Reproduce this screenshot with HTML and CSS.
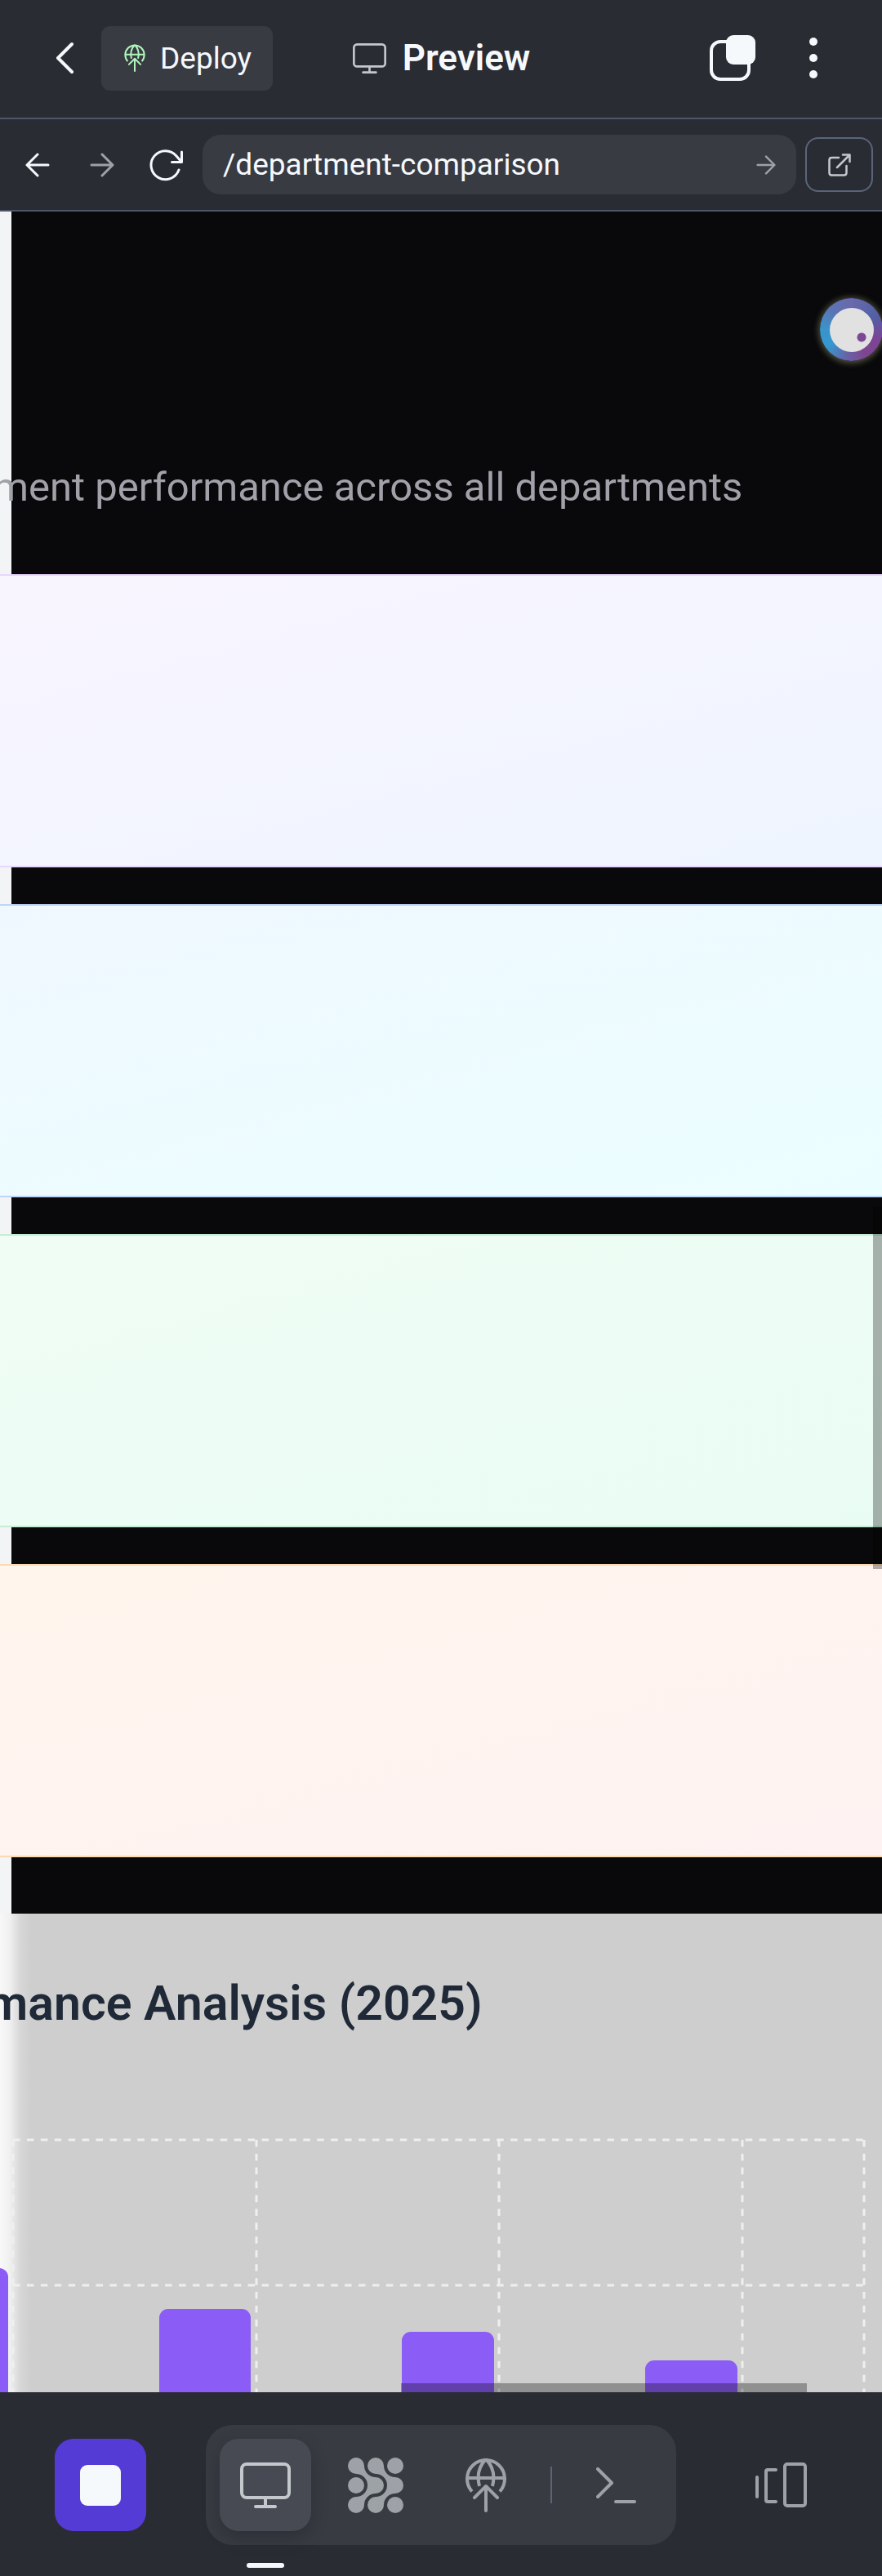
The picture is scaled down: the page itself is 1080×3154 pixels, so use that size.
FILE: index.html
```html
<!DOCTYPE html>
<html lang="en">
<head>
<meta charset="utf-8">
<meta name="viewport" content="width=device-width, initial-scale=1">
<title>Preview</title>
<link rel="stylesheet" href="styles.css">
</head>
<body>
<svg class="defs" aria-hidden="true">
  <symbol id="deploy" viewBox="0 0 50 67">
    <g fill="none" stroke="currentColor" stroke-width="4">
      <path d="M8 41.500A23 23 0 1 1 42 41.500M2 25H48M25 2Q12 15 17 35M25 2Q38 15 33 35"/>
      <path d="M25 65V36M11 49L25 35L39 49" stroke-linecap="round" stroke-linejoin="round"/>
    </g>
  </symbol>
  <symbol id="monitor" viewBox="0 0 62 56">
    <g fill="none" stroke="currentColor" stroke-width="4" stroke-linecap="round">
      <rect x="2" y="2" width="58" height="41" rx="6"/>
      <path d="M31 43V54M19 54H43"/>
    </g>
  </symbol>
  <symbol id="arrow" viewBox="0 0 30 30">
    <path d="M2 15H28M15 2L28 15L15 28" fill="none" stroke="currentColor" stroke-width="3" stroke-linecap="round" stroke-linejoin="round"/>
  </symbol>
</svg>

<div class="app">
  <header class="topbar">
    <div class="topbar-left">
      <button class="icon-btn back" aria-label="Back">
        <svg width="22" height="40" viewBox="0 0 22 40"><path d="M20 3L3 20L20 37" fill="none" stroke="currentColor" stroke-width="4" stroke-linecap="round" stroke-linejoin="round"/></svg>
      </button>
      <button class="deploy"><svg class="deploy-icon" width="26" height="34"><use href="#deploy"/></svg>Deploy</button>
    </div>
    <h1 class="topbar-title"><svg class="title-icon" width="41" height="37"><use href="#monitor"/></svg>Preview</h1>
    <div class="topbar-right">
      <button class="icon-btn" aria-label="Tabs">
        <svg width="56" height="56" viewBox="0 0 56 56"><rect x="2" y="8" width="46" height="46" rx="11" fill="none" stroke="currentColor" stroke-width="4"/><rect x="20" width="36" height="36" rx="9" fill="currentColor"/></svg>
      </button>
      <button class="icon-btn" aria-label="More">
        <svg width="10" height="50" viewBox="0 0 10 50"><g fill="currentColor"><circle cx="5" cy="5" r="5"/><circle cx="5" cy="25" r="5"/><circle cx="5" cy="45" r="5"/></g></svg>
      </button>
    </div>
  </header>

  <form class="navbar">
    <div class="nav-buttons">
      <button type="button" class="icon-btn" aria-label="Previous page"><svg class="flip" width="30" height="30"><use href="#arrow"/></svg></button>
      <button type="button" class="icon-btn dim" aria-label="Next page"><svg width="30" height="30"><use href="#arrow"/></svg></button>
      <button type="button" class="icon-btn" aria-label="Reload">
        <svg width="42" height="40" viewBox="0 0 42 40"><path d="M36 26A17.500 17.500 0 1 1 33 9L39 16M39.500 4V16.500H27.500" fill="none" stroke="currentColor" stroke-width="3" stroke-linecap="round" stroke-linejoin="round"/></svg>
      </button>
    </div>
    <div class="address">
      <input class="address-input" type="text" aria-label="Path" value="/department-comparison">
      <button class="icon-btn dim" aria-label="Go"><svg width="24" height="24"><use href="#arrow"/></svg></button>
    </div>
    <button type="button" class="open-btn" aria-label="Open in new tab">
      <svg width="28" height="28" viewBox="0 0 28 28"><path d="M13 5H4.500Q1.500 5 1.500 8V23.500Q1.500 26.500 4.500 26.500H19.500Q22.500 26.500 22.500 23.500V15M11 17L26.500 1.500M18 1.500H26.500V10" fill="none" stroke="currentColor" stroke-width="2.500" stroke-linecap="round" stroke-linejoin="round"/></svg>
    </button>
  </form>

  <main class="preview">
    <div class="intro"><p class="subtitle">ment performance across all departments</p></div>
    <div class="cards">
      <section class="card purple"></section>
      <section class="card blue"></section>
      <section class="card green"></section>
      <section class="card orange"></section>
    </div>
    <section class="chart">
      <h2 class="chart-title">mance Analysis (2025)</h2>
      <svg class="plot" viewBox="0 0 1080 311">
        <g stroke="#efefef" stroke-width="3" stroke-dasharray="8.500 8.420" fill="none">
          <path d="M16 2H1058M16 180H1058M16 2V311M314 2V311M611 2V311M909 2V311M1058 2V311"/>
        </g>
        <g fill="#8b5cf6">
          <rect x="-102" y="159" width="112" height="170" rx="11"/>
          <rect x="195" y="209" width="112" height="120" rx="11"/>
          <rect x="492" y="237" width="113" height="120" rx="11"/>
          <rect x="790" y="272" width="113" height="120" rx="11"/>
        </g>
      </svg>
    </section>
    <div class="scroll-y"></div>
    <div class="scroll-x"></div>
    <button class="assistant" aria-label="Assistant"><span class="assistant-face"></span></button>
  </main>

  <nav class="dock" aria-label="Tools">
    <button class="tile stop" aria-label="Stop"><span class="stop-square"></span></button>
    <div class="dock-group">
      <button class="tile active" aria-label="Preview"><svg width="62" height="56"><use href="#monitor"/></svg></button>
      <button class="tile" aria-label="Agent">
        <svg width="68" height="68" viewBox="0 0 68 68"><g fill="currentColor">
          <circle cx="10" cy="10" r="10"/><circle cx="34" cy="10" r="10"/><circle cx="58" cy="10" r="10"/>
          <circle cx="10" cy="34" r="10"/><circle cx="34" cy="34" r="10"/><circle cx="58" cy="34" r="10"/>
          <circle cx="10" cy="58" r="10"/><circle cx="34" cy="58" r="10"/><circle cx="58" cy="58" r="10"/>
          <path d="M20 10A14 14 0 0 0 34 24L24 34A14 14 0 0 0 10 20Z"/>
          <path d="M44 10A14 14 0 0 0 58 24L48 34A14 14 0 0 0 34 20Z"/>
          <path d="M10 48A14 14 0 0 0 24 34L34 44A14 14 0 0 0 20 58Z"/>
          <path d="M34 48A14 14 0 0 0 48 34L58 44A14 14 0 0 0 44 58Z"/>
        </g></svg>
      </button>
      <button class="tile" aria-label="Deployments"><svg width="50" height="67"><use href="#deploy"/></svg></button>
      <span class="divider"></span>
      <button class="tile" aria-label="Shell">
        <svg width="50" height="44" viewBox="0 0 50 44"><path d="M2 2L19 19L2 36M24 42H47" fill="none" stroke="currentColor" stroke-width="4" stroke-linecap="round" stroke-linejoin="round"/></svg>
      </button>
    </div>
    <button class="tile" aria-label="Switch panes">
      <svg width="64" height="56" viewBox="0 0 64 56"><g fill="none" stroke="currentColor" stroke-width="4" stroke-linecap="round" stroke-linejoin="round"><path d="M2 18V42M25 9H15Q13 9 13 11V46Q13 48 15 48H25"/><rect x="36" y="2" width="25" height="51" rx="3"/></g></svg>
    </button>
  </nav>
</div>
</body>
</html>
```

FILE: styles.css
```css
* { box-sizing: border-box; }

body {
  margin: 0;
  background: #2a2c34;
  color: #f5f9fc;
  font-family: Roboto, "Noto Sans", sans-serif;
}

button, input {
  border: 0;
  margin: 0;
  padding: 0;
  background: none;
  color: inherit;
  font: inherit;
}

svg { display: block; flex: none; }
.defs { position: absolute; width: 0; height: 0; }

.app {
  display: flex;
  flex-direction: column;
  min-height: 100vh;
  overflow: hidden;
}

/* Top bar */
.topbar {
  display: grid;
  grid-template-columns: 1fr auto 1fr;
  align-items: center;
  height: 146px;
  padding: 0 79px 2px 34px;
  border-bottom: 2px solid #4e5569;
}
.topbar-left { display: flex; align-items: center; }
.topbar-right { display: flex; align-items: center; justify-content: flex-end; gap: 66px; }
.icon-btn { display: flex; align-items: center; justify-content: center; }
.back { width: 90px; height: 80px; }
.deploy {
  display: flex;
  align-items: center;
  gap: 18px;
  height: 79px;
  padding: 0 26px 0 28px;
  border-radius: 11px;
  background: #393b43;
  font-size: 37px;
}
.deploy-icon { color: #b0f5bc; }
.topbar-title {
  display: flex;
  align-items: center;
  gap: 20px;
  margin: 0 0 0 46px;
  font-size: 44px;
  font-weight: 600;
}
.title-icon { color: #c2c8cc; }

/* Address bar */
.navbar {
  display: flex;
  align-items: center;
  height: 113px;
  padding: 0 11px 0 6px;
  border-bottom: 2px solid #4e5569;
}
.nav-buttons { display: flex; width: 242px; padding-right: 5px; }
.nav-buttons .icon-btn { flex: 1; height: 72px; }
.dim { color: #9da2a6; }
.flip { transform: scaleX(-1); }
.address {
  display: flex;
  align-items: center;
  flex: 1;
  height: 73px;
  margin-right: 11px;
  padding: 0 25px;
  border-radius: 22px;
  background: #393b43;
}
.address-input { flex: 1; min-width: 0; font-size: 37px; outline: 0; }
.open-btn {
  display: flex;
  align-items: center;
  justify-content: center;
  width: 83px;
  height: 67px;
  border: 2px solid #5b6579;
  border-radius: 16px;
  color: #c2c8cc;
}

/* Previewed page */
.preview {
  position: relative;
  flex: 1;
  display: flex;
  flex-direction: column;
  background: linear-gradient(to right, #f3f4f6 14px, #09090b 14px);
  font-family: Roboto, sans-serif;
}
.intro {
  display: flex;
  align-items: flex-end;
  height: 444px;
  padding-bottom: 68px;
}
.subtitle {
  margin: 0 0 0 -8px;
  color: #a1a1aa;
  font-size: 49px;
  line-height: 76px;
  white-space: nowrap;
}
.cards { display: grid; gap: 45px; }
.card { height: 359px; border: solid; border-width: 2px 0; }
.purple { background: linear-gradient(165deg, #f9f5ff, #eef5ff); border-color: #e9d5ff; }
.blue { background: linear-gradient(165deg, #eff8ff, #ebfeff); border-color: #bdd6f5; }
.green { background: linear-gradient(165deg, #f0fdf4, #e9fcf4); border-color: #c6ecd6; }
.orange { background: linear-gradient(165deg, #fff5ec, #fef2f2); border-color: #fbd9b2; }

.chart {
  flex: 1;
  display: flex;
  flex-direction: column;
  justify-content: space-between;
  margin-top: 69px;
  padding-top: 74px;
  background: linear-gradient(to right, #f8f8f8, #f0f0f0 12px, #d8d8d8 24px, #cecece 38px);
}
.chart-title {
  margin: 0 0 0 -17px;
  color: #1f2937;
  font-size: 59px;
  font-weight: 600;
  line-height: 72px;
  white-space: nowrap;
}
.plot { width: 100%; }

.scroll-y {
  position: absolute;
  top: 1218px;
  right: 0;
  width: 11px;
  height: 444px;
  background: rgba(0, 0, 0, 0.3);
}
.scroll-x {
  position: absolute;
  bottom: 0;
  left: 491px;
  right: 92px;
  height: 11px;
  background: rgba(0, 0, 0, 0.3);
}
.assistant {
  position: absolute;
  top: 106px;
  right: -1px;
  display: grid;
  place-items: center;
  width: 77px;
  height: 77px;
  border-radius: 50%;
  background: conic-gradient(#6a69ad, #5260a5 60deg, #7b4595 110deg, #7e4590 150deg, #6763a8 190deg, #3498cf 235deg, #3a94cb 270deg, #5b74b3 315deg, #6a69ad);
  box-shadow: 0 1px 7px 2px rgba(150, 150, 110, 0.5);
}
.assistant-face {
  width: 54px;
  height: 54px;
  border-radius: 50%;
  background: radial-gradient(circle at 39px 36px, #7b4896 5px, #e1e1e1 6px);
}

/* Dock */
.dock {
  display: flex;
  align-items: center;
  justify-content: space-between;
  height: 225px;
  padding: 2px 67px 0;
  background: #2a2c34;
}
.dock-group {
  display: flex;
  align-items: center;
  gap: 23px;
  padding: 17px;
  border-radius: 33px;
  background: #393b43;
}
.tile {
  display: grid;
  place-items: center;
  width: 112px;
  height: 113px;
  border-radius: 23px;
  color: #9da2a6;
}
.stop { background: #553bd5; }
.stop-square { width: 50px; height: 50px; border-radius: 9px; background: #f5f9fc; }
.active {
  position: relative;
  background: #474a53;
  color: #c2c8cc;
  box-shadow: 0 8px 22px rgba(0, 0, 0, 0.2);
}
.active::after {
  content: "";
  position: absolute;
  top: 152px;
  left: 33px;
  width: 46px;
  height: 6px;
  border-radius: 3px;
  background: #f5f9fc;
}
.divider { width: 2px; height: 45px; background: #5b6579; }
```
